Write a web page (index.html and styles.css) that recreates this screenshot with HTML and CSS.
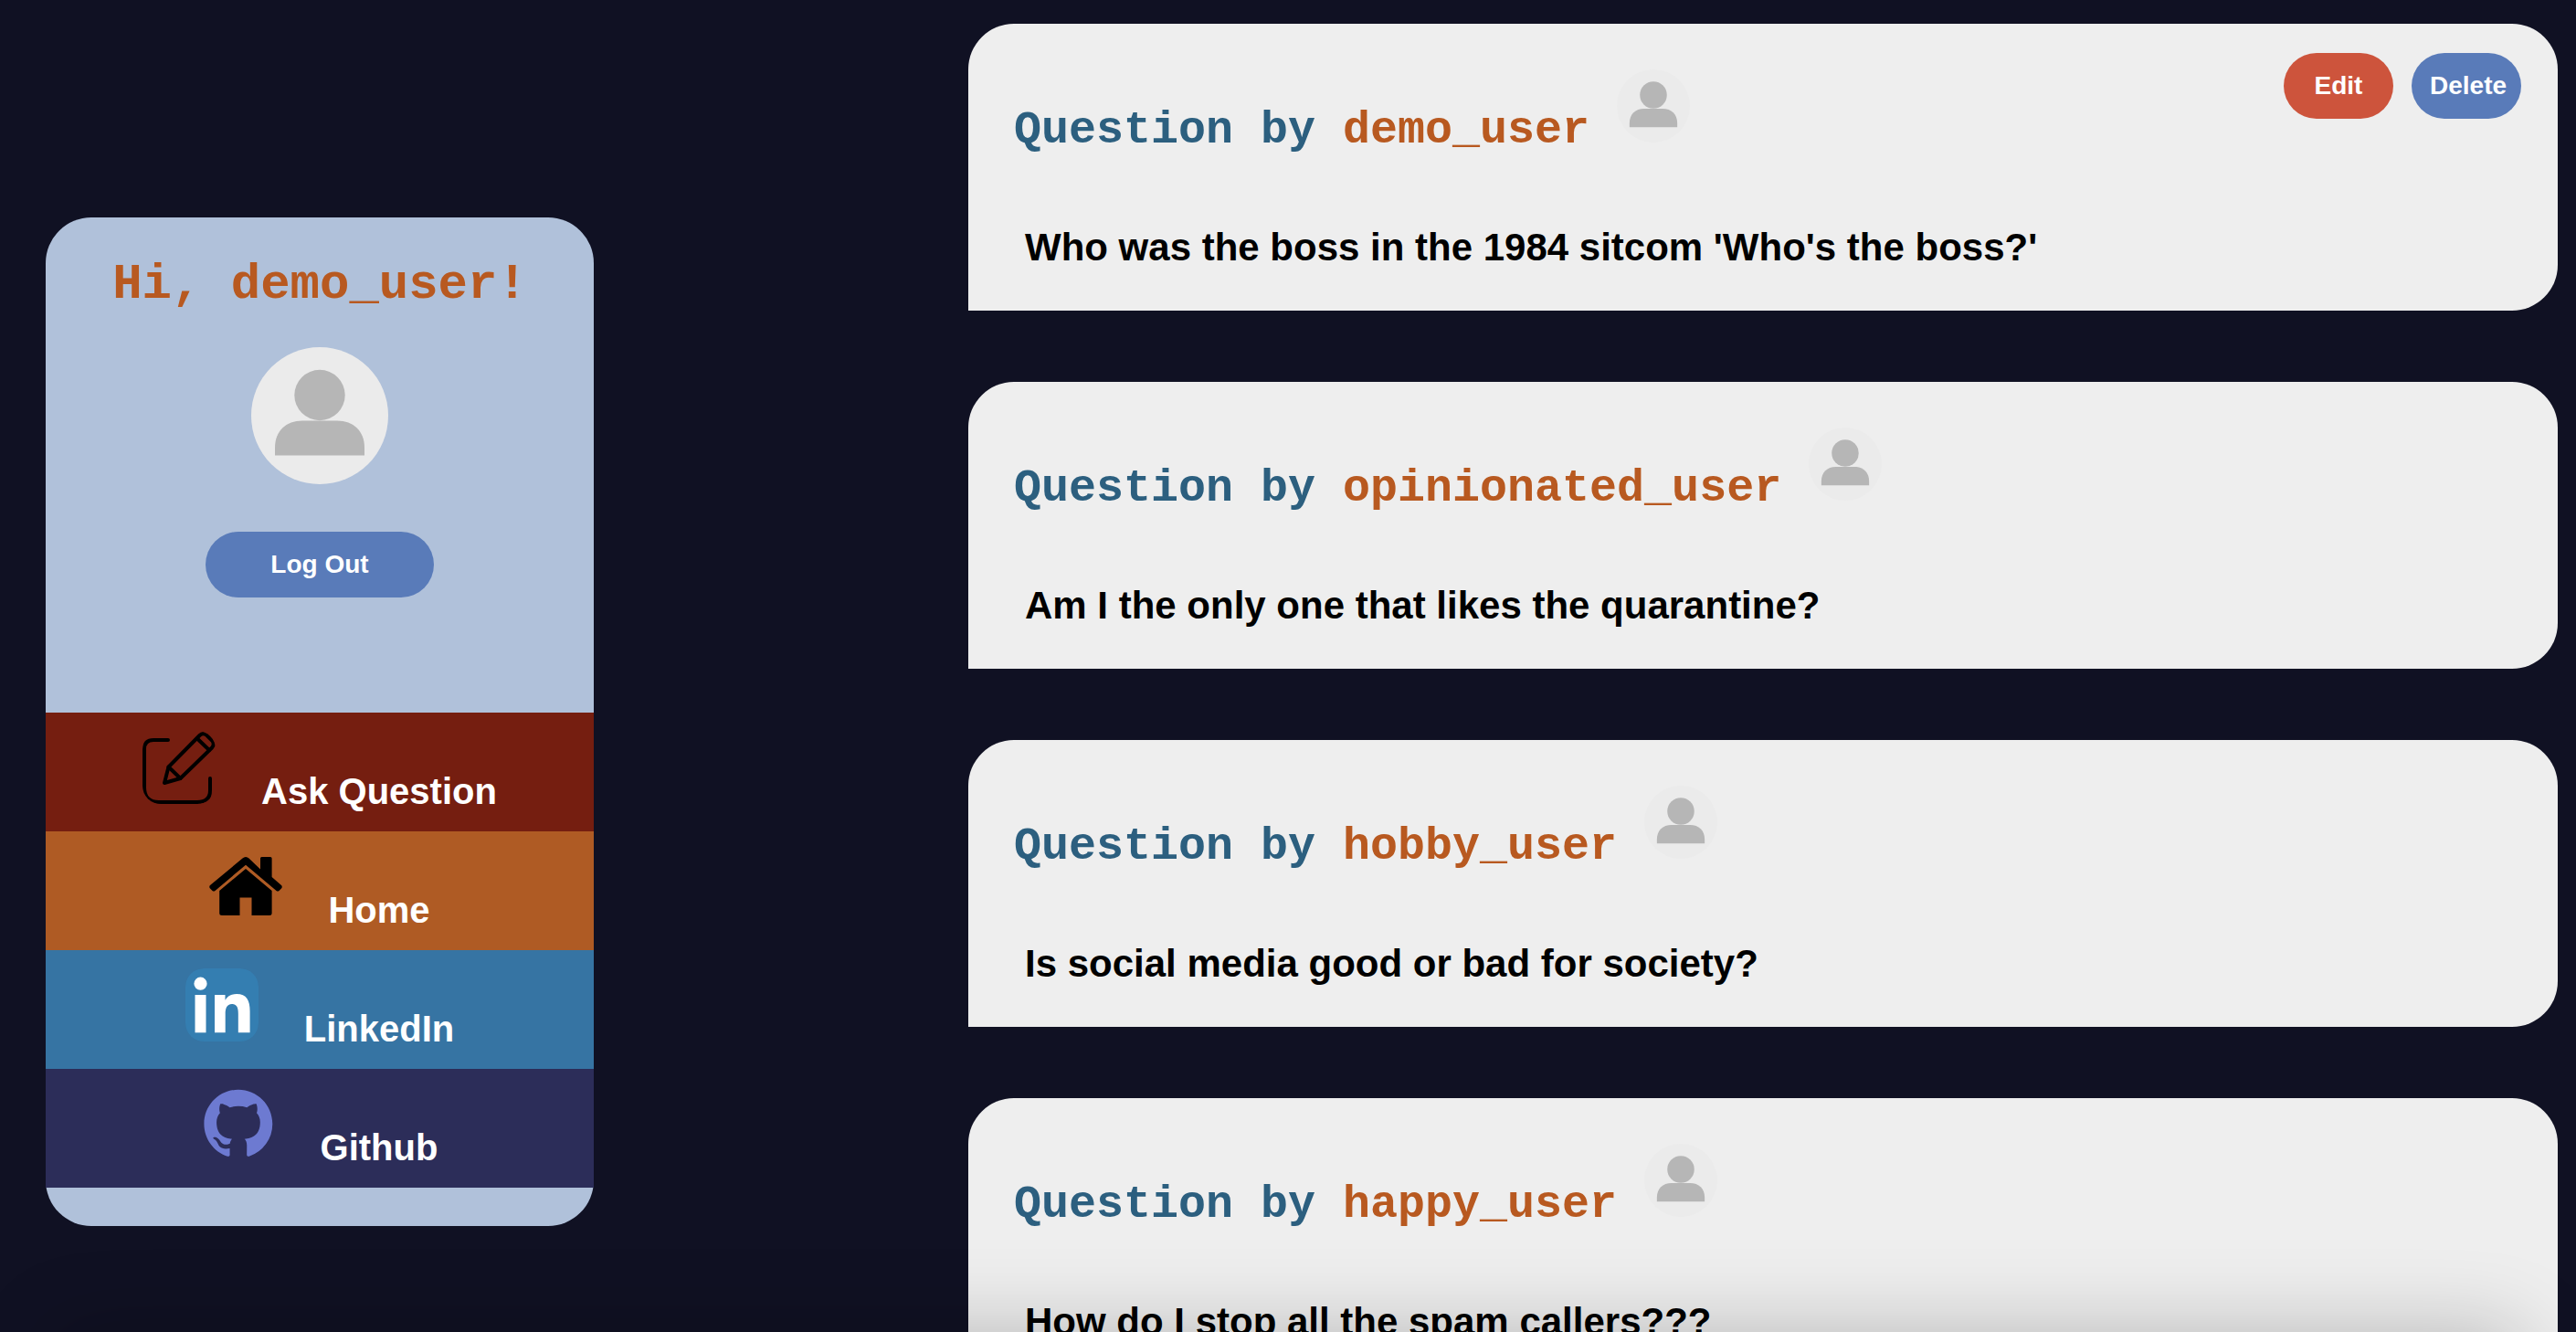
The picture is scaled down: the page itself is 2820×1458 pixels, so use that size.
FILE: index.html
```html
<!DOCTYPE html>
<html lang="en">
<head>
<meta charset="utf-8">
<title>Questions</title>
<link rel="stylesheet" href="styles.css">
</head>
<body>
<svg class="symbols" aria-hidden="true">
  <symbol id="avatar" viewBox="0 0 150 150">
    <circle cx="75" cy="75" r="75" fill="#ebebeb"/>
    <circle cx="75" cy="52.5" r="27.7" fill="#b6b6b6"/>
    <path d="M26 118.5V110C26 92 38 80.5 56 80.5H94C112 80.5 124 92 124 110V118.5Z" fill="#b6b6b6"/>
  </symbol>
</svg>
<div class="page">
  <aside class="sidebar">
    <h1 class="greeting">Hi, demo_user!</h1>
    <svg class="avatar avatar-large" role="img" aria-label="demo_user"><use href="#avatar"/></svg>
    <button class="button button-wide" type="button">Log Out</button>
    <nav class="menu">
      <a class="menu-item ask" href="#ask">
        <svg class="menu-icon" viewBox="0 0 80 80" fill="none" stroke="#000" stroke-width="4" stroke-linecap="round" stroke-linejoin="round">
          <path d="M28 10H12Q2 10 2 20V62Q2 78 18 78H60Q74 78 74 65V52"/>
          <path d="M24 57L28.500 39.500L62.500 5Q66 1.500 70 4.500L76 10.500Q79.500 14.500 76 18.500L41.500 52Z"/>
          <path d="M28.500 39.500L41.500 52M60.500 9L73 21"/>
        </svg>
        <span>Ask Question</span>
      </a>
      <a class="menu-item home" href="#home">
        <svg class="menu-icon" viewBox="0 0 80 80" fill="#000">
          <path d="M40 8Q42 8 43.500 9.500L56 21.500V9.500Q56 8 57.500 8H67Q68.600 8 68.600 9.500V30L79 39Q80.500 40.500 79 42.500L76.500 45Q75 46 73.500 45L40 16.700L6.500 45Q5 46 3.500 45L1 42.500Q-.5 40.500 1 39L36.500 9.500Q38 8 40 8Z"/>
          <path d="M40 21L68.600 45V69.500Q68.600 72 66 72H46.500V52.500H33.500V72H14Q11.200 72 11.200 69.500V45Z"/>
        </svg>
        <span>Home</span>
      </a>
      <a class="menu-item linkedin" href="#linkedin">
        <svg class="menu-icon" viewBox="0 0 80 80" fill="#fff">
          <rect width="80" height="80" rx="20" fill="#347eb1"/>
          <circle cx="16.500" cy="16.700" r="7.100"/>
          <rect x="10.500" y="29" width="12" height="41.300"/>
          <path d="M32 29H43.500V34.700Q47.500 28 56 28C67 28 70.600 35 70.600 47V70.300H57.800V50C57.800 44 57 39 51 39S43.700 44 43.700 50V70.300H32Z"/>
        </svg>
        <span>LinkedIn</span>
      </a>
      <a class="menu-item github" href="#github">
        <svg class="menu-icon" viewBox="0 0 80 80" fill="#6d7ad1">
          <path transform="translate(2.400 2.800) scale(4.680)" d="M8 0C3.580 0 0 3.580 0 8c0 3.540 2.290 6.530 5.470 7.590.4.070.55-.17.55-.38 0-.19-.01-.82-.01-1.490-2.010.37-2.530-.49-2.690-.94-.09-.23-.48-.94-.82-1.130-.28-.15-.68-.52-.01-.53.63-.01 1.080.58 1.230.82.72 1.210 1.870.87 2.330.66.07-.52.28-.87.51-1.070-1.780-.2-3.640-.89-3.640-3.950 0-.87.31-1.590.82-2.150-.08-.2-.36-1.020.08-2.120 0 0 .67-.21 2.200.82.64-.18 1.320-.27 2-.27s1.360.09 2 .27c1.530-1.040 2.200-.82 2.200-.82.44 1.100.16 1.920.08 2.120.51.56.82 1.270.82 2.150 0 3.070-1.870 3.750-3.650 3.950.29.25.54.73.54 1.480 0 1.070-.01 1.930-.01 2.200 0 .21.15.46.55.38A8.010 8.010 0 0 0 16 8c0-4.420-3.580-8-8-8z"/>
        </svg>
        <span>Github</span>
      </a>
    </nav>
  </aside>
  <main class="feed">
    <article class="card">
      <div class="card-body">
        <header class="card-header">
          <h2 class="byline">Question by <span class="author">demo_user</span></h2>
          <svg class="avatar"><use href="#avatar"/></svg>
        </header>
        <p class="question">Who was the boss in the 1984 sitcom 'Who's the boss?'</p>
      </div>
      <div class="actions">
        <button class="button button-edit" type="button">Edit</button>
        <button class="button" type="button">Delete</button>
      </div>
    </article>
    <article class="card">
      <div class="card-body">
        <header class="card-header">
          <h2 class="byline">Question by <span class="author">opinionated_user</span></h2>
          <svg class="avatar"><use href="#avatar"/></svg>
        </header>
        <p class="question">Am I the only one that likes the quarantine?</p>
      </div>
    </article>
    <article class="card">
      <div class="card-body">
        <header class="card-header">
          <h2 class="byline">Question by <span class="author">hobby_user</span></h2>
          <svg class="avatar"><use href="#avatar"/></svg>
        </header>
        <p class="question">Is social media good or bad for society?</p>
      </div>
    </article>
    <article class="card">
      <div class="card-body">
        <header class="card-header">
          <h2 class="byline">Question by <span class="author">happy_user</span></h2>
          <svg class="avatar"><use href="#avatar"/></svg>
        </header>
        <p class="question">How do I stop all the spam callers???</p>
      </div>
    </article>
  </main>
</div>
<div class="bottom-shadow"></div>
</body>
</html>
```

FILE: styles.css
```css
* {
  box-sizing: border-box;
}

html {
  scrollbar-width: none;
}

body {
  margin: 0;
  background: #101123;
  font-family: "Liberation Sans", Arial, sans-serif;
  font-weight: 700;
}

h1,
h2,
p {
  margin: 0;
}

.symbols {
  position: absolute;
  width: 0;
  height: 0;
}

.page {
  display: grid;
  grid-template-columns: 600px 1fr;
  column-gap: 410px;
  align-items: start;
  padding: 0 20px 0 50px;
}

/* Sidebar */
.sidebar {
  position: sticky;
  top: 238px;
  display: flex;
  flex-direction: column;
  align-items: center;
  margin-top: 238px;
  padding: 43px 0 42px;
  border-radius: 50px;
  background: #b0c1da;
}

.greeting {
  margin-bottom: 37px;
  color: #b85920;
  font: 700 54px/62px "Courier New", "Liberation Mono", monospace;
}

.avatar {
  flex: none;
  width: 80px;
  height: 80px;
}

.avatar-large {
  width: 150px;
  height: 150px;
  margin-bottom: 52px;
}

.button {
  width: 120px;
  height: 72px;
  padding: 0 20px;
  border: 0;
  border-radius: 36px;
  background: #597bb9;
  color: #fff;
  font: inherit;
  font-size: 28px;
  white-space: nowrap;
  cursor: pointer;
}

.button-wide {
  width: 250px;
}

.button-edit {
  background: #cd543c;
}

.menu {
  width: 100%;
  margin-top: 126px;
}

.menu-item {
  display: flex;
  justify-content: center;
  align-items: baseline;
  gap: 50px;
  height: 130px;
  padding-top: 20px;
  color: #fff;
  font-size: 40px;
  text-decoration: none;
}

.menu-icon {
  width: 80px;
  height: 80px;
  border-radius: 20px;
  overflow: hidden;
}

.ask {
  background: #751e10;
}

.home {
  background: #af5b24;
}

.linkedin {
  background: #3674a3;
}

.github {
  background: #2c2d59;
}

/* Question feed */
.feed {
  display: flex;
  flex-direction: column;
  gap: 78px;
  padding: 26px 0;
}

.card {
  display: flex;
  justify-content: space-between;
  align-items: flex-start;
  border-radius: 50px 50px 50px 0;
  background: #eee;
}

.card-body {
  padding: 50px 0 45px 50px;
}

.card-header {
  display: flex;
  align-items: baseline;
  gap: 30px;
}

.byline {
  color: #2c5f7f;
  font: 700 50px/57px "Courier New", "Liberation Mono", monospace;
}

.author {
  color: #b85920;
}

.question {
  margin: 76px 0 0 12px;
  color: #000;
  font-size: 42px;
  line-height: 48px;
}

.actions {
  display: flex;
  gap: 20px;
  padding: 32px 40px 0 0;
}

/* Soft shade cast along the bottom edge of the window */
.bottom-shadow {
  position: fixed;
  right: 60px;
  bottom: -100px;
  left: 60px;
  height: 100px;
  box-shadow: 0 0 90px rgba(0, 0, 0, 0.23);
  pointer-events: none;
}
```
